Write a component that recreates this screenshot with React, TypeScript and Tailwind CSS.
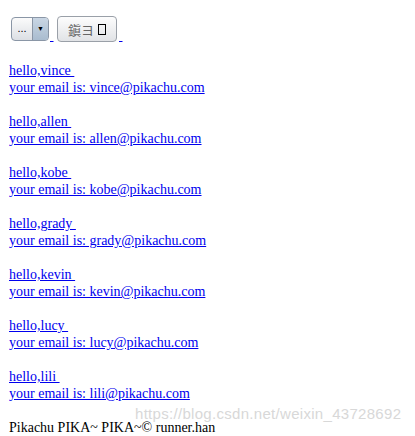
const users = ['vince', 'allen', 'kobe', 'grady', 'kevin', 'lucy', 'lili'];

export default function App() {
  return (
    <div className="relative w-[415px] h-[436px] bg-white overflow-hidden font-['Liberation_Serif',serif] text-[14px] leading-[17px]">
      {/* top form */}
      <div className="flex items-end pt-[14px] pl-[11px] h-[42px]">
        <div className="flex w-[38px] h-[24px] mb-[1px] rounded-[4px] border border-[#8a96a6] bg-gradient-to-b from-[#fbfbfb] to-[#dcdfe4] overflow-hidden">
          <div className="flex-1 flex items-center justify-center text-[11px] font-['Liberation_Sans',sans-serif] text-black pb-[2px]">...</div>
          <div className="w-[16px] flex items-center justify-center border-l border-[#8a96a6] bg-gradient-to-b from-[#c9d6e4] to-[#a9bccf]">
            <span className="text-[7px] leading-none text-black">▼</span>
          </div>
        </div>
        <a className="text-[#0000ee] underline w-[6px] ml-[1px] mb-[-2px]">&nbsp;</a>
        <button className="ml-[1px] w-[60px] h-[26px] rounded-[4px] border border-[#9aa0a8] bg-gradient-to-b from-[#fdfdfd] to-[#e1e3e6] flex items-center justify-center gap-[4px] text-[13px] text-[#666] font-['Noto_Sans_CJK_SC',sans-serif]">
          <span>鎭ヨ</span>
          <span className="inline-block w-[8px] h-[11px] border-[1.5px] border-black"></span>
        </button>
        <a className="text-[#0000ee] underline w-[8px] ml-[2px] mb-[-2px]">&nbsp;</a>
      </div>

      {/* list */}
      <div className="pl-[9px] pt-[20px]">
        {users.map((u) => (
          <div key={u} className="mb-[17px]">
            <a href="#" className="text-[#0000ee] underline whitespace-pre">
              {`hello,${u} `}
              <br />
              {`your email is: ${u}@pikachu.com`}
            </a>
          </div>
        ))}
        <p className="text-black">Pikachu PIKA~ PIKA~© runner.han</p>
      </div>

      {/* watermark */}
      <div className="absolute left-[135px] top-[405px] text-[15px] font-['Liberation_Sans',sans-serif] text-[#d8d8d8] tracking-[0.3px]">
        https://blog.csdn.net/weixin_43728692
      </div>
    </div>
  );
}
